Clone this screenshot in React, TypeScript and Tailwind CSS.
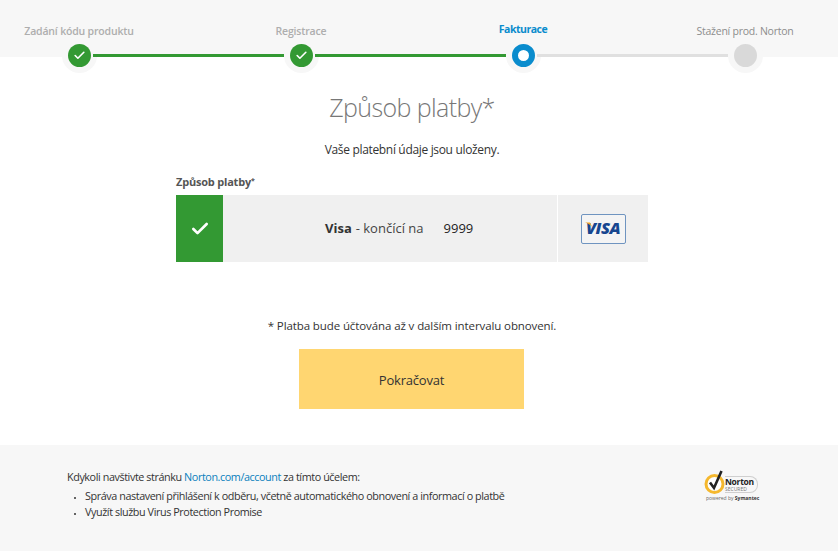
import { Check } from "lucide-react";

const steps = [
  { label: "Zadání kódu produktu", state: "done" },
  { label: "Registrace", state: "done" },
  { label: "Fakturace", state: "current" },
  { label: "Stažení prod. Norton", state: "todo" },
];

const StepDot = ({ state }: { state: string }) => {
  if (state === "done") {
    return (
      <div className="w-[23px] h-[23px] rounded-full bg-[#339933] flex items-center justify-center">
        <Check size={13} strokeWidth={3} className="text-white" />
      </div>
    );
  }
  if (state === "current") {
    return <div className="w-[23px] h-[23px] rounded-full border-[6px] border-[#0a8ccd] bg-white" />;
  }
  return <div className="w-[23px] h-[23px] rounded-full bg-[#d9d9d9]" />;
};

const Stepper = () => (
  <div className="grid grid-cols-[222px_222px_222px_222px] w-[888px] -ml-[32px]">
    {steps.map((step, index) => (
      <div key={step.label} className="relative flex flex-col items-center pt-[23px]">
        <p
          className={
            step.state === "current"
              ? "h-[16px] leading-[15px] text-[10.5px] font-bold tracking-[-0.5px] text-[#0a8ccd] -mt-px mb-px"
              : step.state === "todo"
                ? "h-[16px] leading-[16px] text-[10.5px] tracking-[-0.25px] text-[#8d8d8d]"
                : "h-[16px] leading-[16px] text-[10.5px] font-semibold tracking-[-0.18px] text-[#aeaeae]"
          }
        >
          {step.label}
        </p>
        <div className="-mt-px w-[35px] h-[35px] rounded-full bg-[#f7f7f7] flex items-center justify-center">
          <StepDot state={step.state} />
        </div>
        {index < 3 && (
          <div
            className={
              index < 2
                ? "absolute left-[125px] top-[54px] w-[191px] h-[3px] bg-[#339933]"
                : "absolute left-[125px] top-[54px] w-[191px] h-[3px] bg-[#e0e0e0]"
            }
          />
        )}
      </div>
    ))}
  </div>
);

const VisaBadge = () => (
  <div className="relative w-[45px] h-[30px] border border-[#6f94c0] rounded-[2px] bg-[#f4f4f4] flex items-center justify-center">
    <span className="text-[16.5px] leading-none font-extrabold italic text-[#17468f] tracking-[-0.5px]">VISA</span>
    <svg className="absolute left-[3px] top-[7px]" width="8" height="6" viewBox="0 0 8 6">
      <path d="M0 0.5 L5 0.5 L7.5 5.5 C6 3 3 1.5 0 0.5Z" fill="#f5a623" />
    </svg>
  </div>
);

const NortonBadge = () => (
  <div className="flex flex-col items-start w-[53px]">
    <div className="flex items-center">
      <svg width="22" height="25" viewBox="0 0 22 25" className="shrink-0">
        <circle cx="10.5" cy="14" r="8.5" fill="#fff" stroke="#f5b82e" strokeWidth="3" />
        <path d="M6 12.5 L10 18 L17.5 1" fill="none" stroke="#222" strokeWidth="2.6" />
      </svg>
      <div className="flex flex-col -ml-px border border-l-0 border-[#cfcfcf] rounded-r-[8px] pr-[3px] h-[17px] justify-center mt-[4px]">
        <span className="text-[8.5px] leading-[9px] font-bold text-[#222] tracking-[-0.3px]">Norton</span>
        <span className="text-[5px] leading-[6px] text-[#777]">SECURED</span>
      </div>
    </div>
    <span className="text-[5px] leading-[7px] text-[#666] whitespace-nowrap ml-[2px]">
      powered by <b className="text-[#333]">Symantec</b>
    </span>
  </div>
);

export default function App() {
  return (
    <div className="w-[838px] h-[558px] overflow-hidden bg-white font-['Open_Sans',sans-serif] text-[#333]">
      <div className="h-[72px] bg-[linear-gradient(#f7f7f7_57px,#ffffff_57px)]">
        <Stepper />
      </div>

      <div className="flex flex-col items-center pr-[14px]">
        <h1 className="mt-[16px] h-[38px] leading-[38px] text-[25px] font-light tracking-[-0.6px] text-[#777]">
          Způsob platby*
        </h1>
        <p className="mt-[15px] h-[18px] leading-[18px] text-[12px] tracking-[-0.33px]">
          Vaše platební údaje jsou uloženy.
        </p>

        <div className="w-[472px] mt-[14px]">
          <p className="h-[18px] leading-[18px] text-[11px] font-bold tracking-[-0.2px] text-[#555]">
            Způsob platby<sup className="text-[7px]">*</sup>
          </p>
          <div className="mt-[4px] flex h-[67px] bg-[#f0f0f0]">
            <div className="w-[47px] bg-[#339933] flex items-center justify-center">
              <Check size={20} strokeWidth={3.2} className="text-white" />
            </div>
            <div className="w-[334px] flex items-center pl-[102px] text-[13px]">
              <b className="font-bold">Visa</b>
              <span className="ml-1 text-[#444]">- končící na</span>
              <span className="ml-[20px] text-[#222]">9999</span>
            </div>
            <div className="flex-1 border-l border-white flex items-center justify-center">
              <VisaBadge />
            </div>
          </div>
        </div>

        <p className="mt-[55px] h-[18px] leading-[18px] text-[11.5px] tracking-[-0.1px]">
          * Platba bude účtována až v dalším intervalu obnovení.
        </p>
        <button className="mt-[14px] mr-px w-[225px] h-[60px] pt-[3px] bg-[#ffd671] text-[13px] tracking-[-0.2px] text-[#333]">
          Pokračovat
        </button>
      </div>

      <div className="mt-[36px] h-[106px] bg-[#f7f7f7] flex justify-between pl-[67px] pr-[81px] pt-[24px]">
        <div className="text-[10.8px] leading-[16px] tracking-[-0.42px]">
          <p>
            Kdykoli navštivte stránku <span className="text-[#0a7fbd]">Norton.com/account</span> za tímto účelem:
          </p>
          <ul className="mt-[3px] list-disc pl-[18px] marker:text-[7px]">
            <li>Správa nastavení přihlášení k odběru, včetně automatického obnovení a informací o platbě</li>
            <li>Využít službu Virus Protection Promise</li>
          </ul>
        </div>
        <div className="mt-px">
          <NortonBadge />
        </div>
      </div>
    </div>
  );
}
